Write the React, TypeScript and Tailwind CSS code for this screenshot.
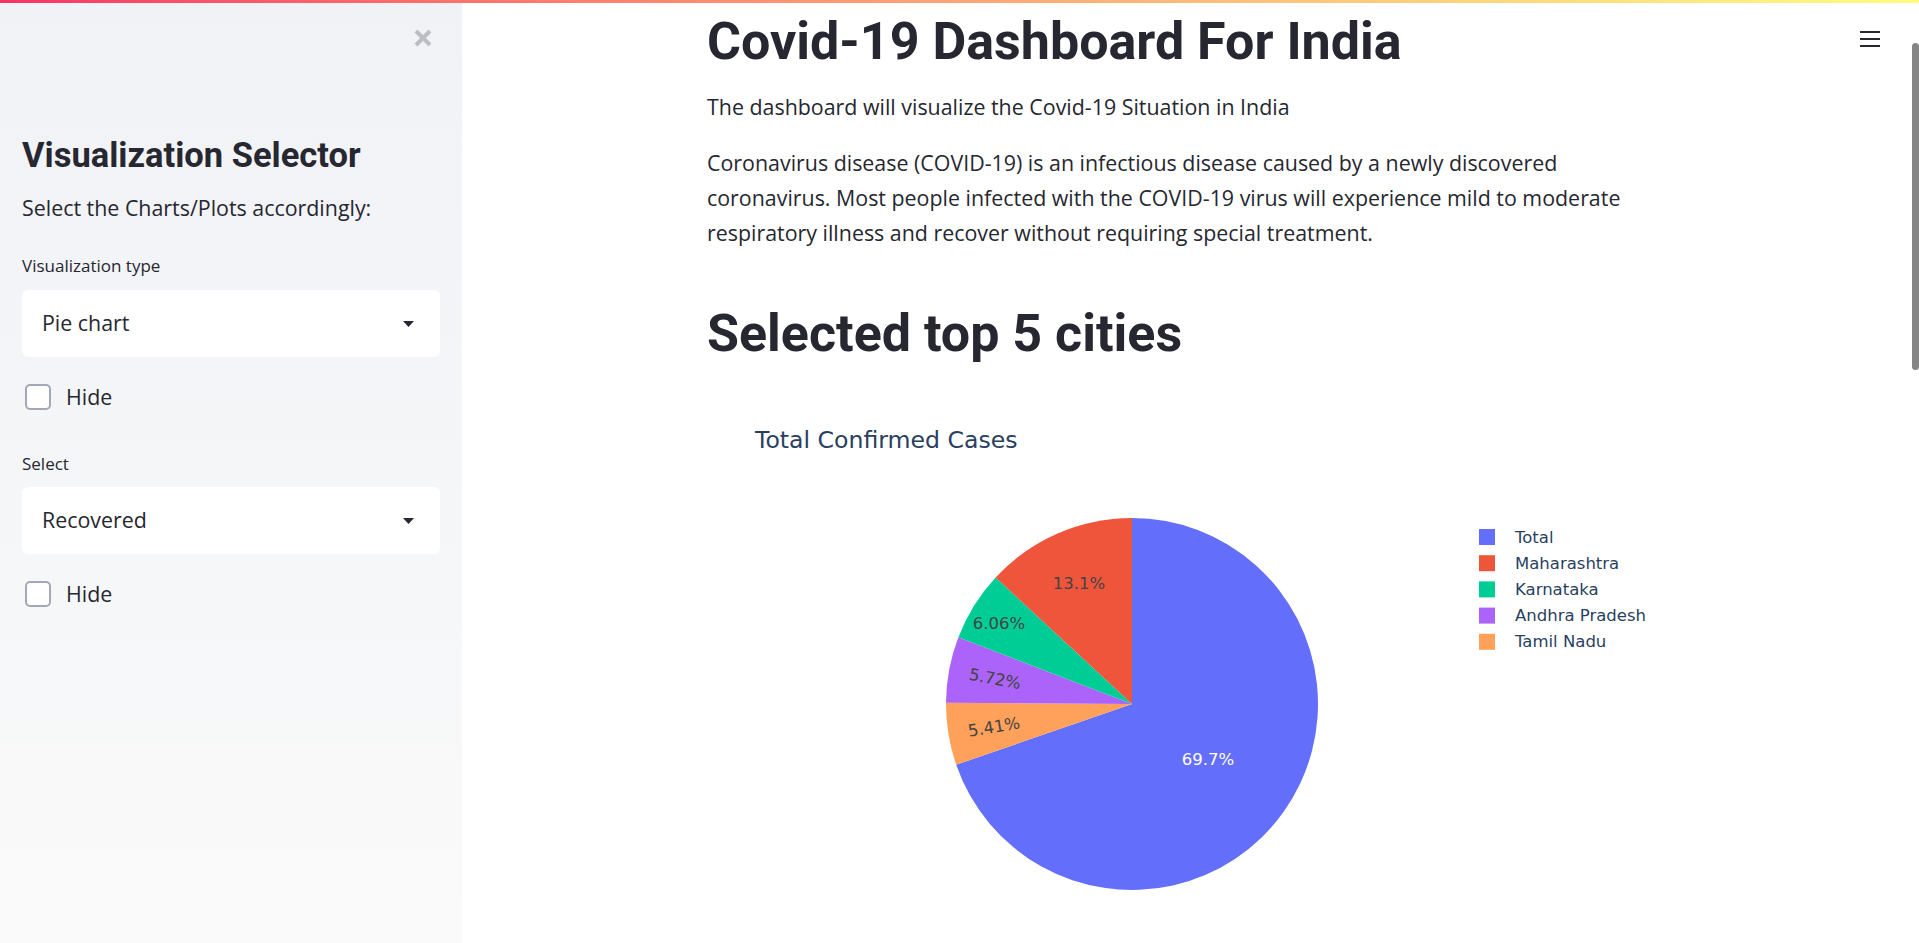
import React from 'react';

const slices = [
  { name: 'Total', value: 69.7, color: '#636efa' },
  { name: 'Tamil Nadu', value: 5.41, color: '#ffa15a' },
  { name: 'Andhra Pradesh', value: 5.72, color: '#ab63fa' },
  { name: 'Karnataka', value: 6.06, color: '#00cc96' },
  { name: 'Maharashtra', value: 13.1, color: '#ef553b' },
];

const legend = [
  { name: 'Total', color: '#636efa' },
  { name: 'Maharashtra', color: '#ef553b' },
  { name: 'Karnataka', color: '#00cc96' },
  { name: 'Andhra Pradesh', color: '#ab63fa' },
  { name: 'Tamil Nadu', color: '#ffa15a' },
];

const labels = [
  { text: '69.7%', x: 501, y: 359, rot: 0, fill: '#ffffff' },
  { text: '5.41%', x: 287, y: 327, rot: -9.4, fill: '#444444' },
  { text: '5.72%', x: 288, y: 279, rot: 10.7, fill: '#444444' },
  { text: '6.06%', x: 292, y: 223, rot: 0, fill: '#444444' },
  { text: '13.1%', x: 372, y: 183, rot: 0, fill: '#444444' },
];

function slicePath(cx: number, cy: number, r: number, a0: number, a1: number) {
  const p = (a: number) => {
    const t = (a * Math.PI) / 180;
    return [cx + r * Math.sin(t), cy - r * Math.cos(t)];
  };
  const [x0, y0] = p(a0);
  const [x1, y1] = p(a1);
  const large = a1 - a0 > 180 ? 1 : 0;
  return `M${cx},${cy} L${x0},${y0} A${r},${r} 0 ${large} 1 ${x1},${y1} Z`;
}

function PieChart() {
  const total = slices.reduce((s, d) => s + d.value, 0);
  let angle = 0;
  const cx = 425;
  const cy = 304;
  const r = 186;
  return (
    <svg width="960" height="543" className="block" style={{ fontFamily: '"DejaVu Sans", Verdana, sans-serif' }}>
      <text x="48" y="41" dominantBaseline="middle" fontSize="23.6" fill="#2a3f5f">
        Total Confirmed Cases
      </text>
      {slices.map((s) => {
        const a0 = angle;
        const a1 = angle + (s.value / total) * 360;
        angle = a1;
        return <path key={s.name} d={slicePath(cx, cy, r, a0, a1)} fill={s.color} />;
      })}
      {labels.map((l) => (
        <text
          key={l.text}
          x={l.x}
          y={l.y}
          textAnchor="middle"
          dominantBaseline="central"
          fontSize="16.5"
          fill={l.fill}
          transform={`rotate(${l.rot} ${l.x} ${l.y})`}
        >
          {l.text}
        </text>
      ))}
      {legend.map((l, i) => (
        <g key={l.name}>
          <rect x="772" y={129 + i * 26.2} width="16" height="16" fill={l.color} />
          <text x="808" y={137 + i * 26.2} dominantBaseline="central" fontSize="16.5" fill="#2a3f5f">
            {l.name}
          </text>
        </g>
      ))}
    </svg>
  );
}

function Caret() {
  return (
    <svg width="11" height="6" viewBox="0 0 11 6">
      <path d="M0 0 L11 0 L5.5 6 Z" fill="#262730" />
    </svg>
  );
}

function SelectBox({ value }: { value: string }) {
  return (
    <div className="flex h-[67px] items-center justify-between rounded-md bg-white pl-5 pr-[26px]">
      <span className="text-[21.4px] text-[#262730]">{value}</span>
      <Caret />
    </div>
  );
}

function HideCheckbox() {
  return (
    <div className="flex h-[26px] items-center gap-[15px] pl-[3px]">
      <div className="h-[26px] w-[26px] rounded-[5px] border-2 border-[#a3a8b8] bg-white" />
      <span className="text-[21.4px] text-[#262730]">Hide</span>
    </div>
  );
}

export default function App() {
  return (
    <div className="relative flex h-[943px] w-full overflow-hidden bg-white font-['Open_Sans',sans-serif] text-[#262730]">
      <div className="absolute left-0 right-0 top-0 z-10 h-[3px] bg-linear-to-r from-[#f63366] to-[#fffd80]" />

      <aside className="flex w-[462px] shrink-0 flex-col bg-linear-to-b from-[#f0f2f6] to-[#fafafa] px-[22px]">
        <div className="flex justify-end pr-[7px] pt-[28px]">
          <svg width="20" height="20" viewBox="0 0 20 20">
            <path d="M3 3 L17 17 M17 3 L3 17" stroke="#bdbec4" strokeWidth="4" />
          </svg>
        </div>
        <h2 className="mt-[87px] font-['Roboto',sans-serif] text-[34.5px] font-bold leading-[40px]">Visualization Selector</h2>
        <p className="mt-[19px] text-[21.4px] leading-[28px]">Select the Charts/Plots accordingly:</p>
        <label className="mt-[32px] text-[17px] leading-[24px]">Visualization type</label>
        <div className="mt-[12px]">
          <SelectBox value="Pie chart" />
        </div>
        <div className="mt-[27px]">
          <HideCheckbox />
        </div>
        <label className="mt-[42px] text-[17px] leading-[24px]">Select</label>
        <div className="mt-[11px]">
          <SelectBox value="Recovered" />
        </div>
        <div className="mt-[27px]">
          <HideCheckbox />
        </div>
      </aside>

      <main className="relative flex-1">
        <div className="absolute right-[39px] top-[31px] flex w-[20px] flex-col gap-[5px]">
          <div className="h-[2px] bg-[#262730]" />
          <div className="h-[2px] bg-[#262730]" />
          <div className="h-[2px] bg-[#262730]" />
        </div>
        <div className="absolute right-0 top-[43px] h-[327px] w-[7px] rounded-full bg-[#858585]" />

        <div className="ml-[245px] w-[940px]">
          <h1 className="mt-[12px] font-['Roboto',sans-serif] text-[52px] font-bold leading-[60px]">Covid-19 Dashboard For India</h1>
          <p className="mt-[17px] text-[21.4px] leading-[35px]">The dashboard will visualize the Covid-19 Situation in India</p>
          <p className="mt-[21px] text-[21.4px] leading-[35px]">
            Coronavirus disease (COVID-19) is an infectious disease caused by a newly discovered coronavirus. Most people
            infected with the COVID-19 virus will experience mild to moderate respiratory illness and recover without
            requiring special treatment.
          </p>
          <h2 className="mt-[54px] font-['Roboto',sans-serif] text-[52px] font-bold leading-[60px]">Selected top 5 cities</h2>
          <div className="mt-[36px]">
            <PieChart />
          </div>
        </div>
      </main>
    </div>
  );
}
